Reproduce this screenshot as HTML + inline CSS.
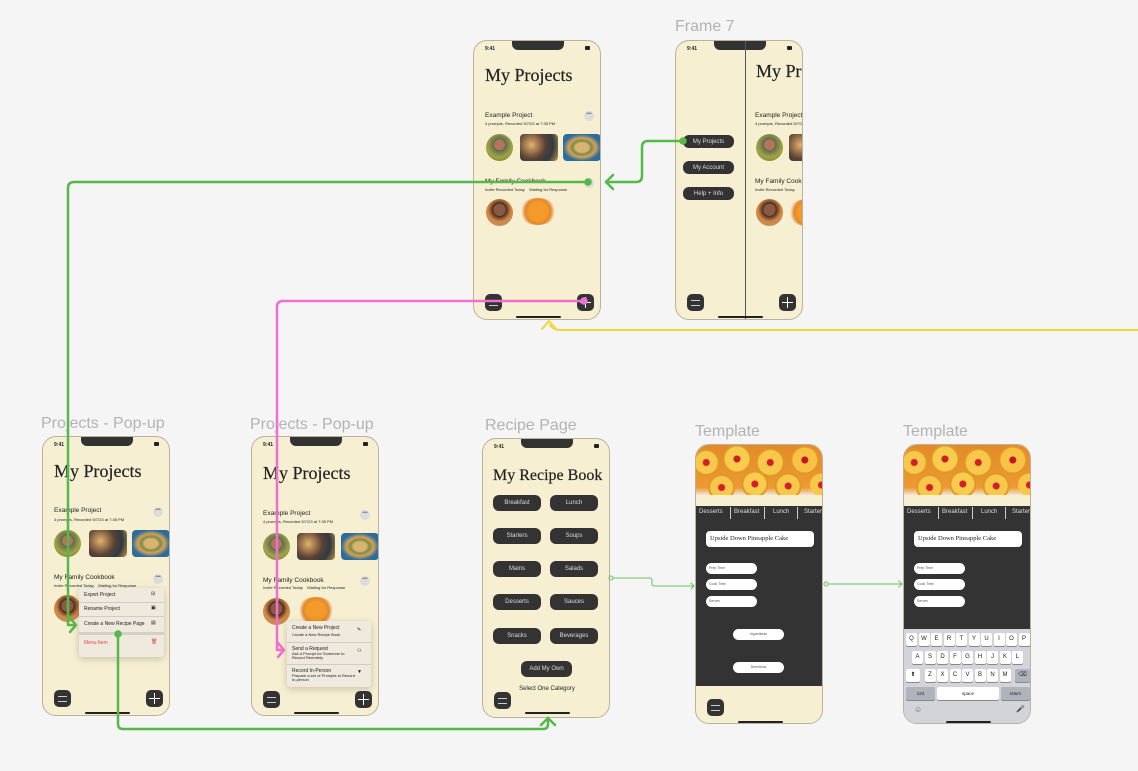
<!DOCTYPE html>
<html><head><meta charset="utf-8">
<style>
*{margin:0;padding:0;box-sizing:border-box}
body{width:1138px;height:771px;background:#f5f5f5;position:relative;overflow:hidden;font-family:"Liberation Sans",sans-serif;color:#222}
.ph{position:absolute;width:128px;height:280px;background:#f7efd2;border:1px solid #b9b29c;border-radius:14px;overflow:hidden}
.ph *{position:absolute}
.notch{left:38px;top:-1px;width:52px;height:10px;background:#333;border-radius:0 0 6px 6px}
.st{left:11px;top:5px;font-size:5px;font-weight:bold}
.sig{right:10px;top:5px;width:14px;height:4px}
.sig:after{content:"";position:absolute;right:0;top:0;width:5px;height:4px;background:#222;border-radius:1px}
.ti{font-family:"Liberation Serif",serif;font-size:18px;white-space:nowrap;-webkit-text-stroke:.2px #222}
.h1{font-size:6.5px;white-space:nowrap}
.h2{font-size:4px;white-space:nowrap}
.dots{width:10px;height:10px;border-radius:50%;background:#dcdcdc;font-size:5px;text-align:center;line-height:7px;color:#666}
.c1{width:27px;height:27px;border-radius:50%;background:radial-gradient(circle at 50% 40%,#b7745a 0 25%,#5b6b52 26%,#a3a542 60%,#5d6a2e)}
.c2{width:27px;height:27px;border-radius:50%;background:radial-gradient(circle at 50% 40%,#8a5a44 0 28%,#3e2d28 30%,#d9843a 55%,#8fa0a8)}
.r1{width:38px;height:27px;border-radius:4px;background:radial-gradient(circle at 30% 40%,#e6b16b,#5a4234 45%,#2e3a44 70%,#c9923d)}
.r2{width:38px;height:27px;border-radius:4px;background:radial-gradient(ellipse at 50% 50%,#d9b470 0 25%,#7a8c46 35%,#d3a05a 50%,#2d6d9b 70%)}
.r3{width:38px;height:27px;border-radius:50%;background:radial-gradient(circle,#f29a2a 0 40%,#e5872c 55%,#f1dfc7 70%,transparent 72%)}
.bb{width:17px;height:17px;border-radius:5px;background:#333}
.bb.m:after{content:"";position:absolute;left:4px;top:6px;width:9px;height:4px;border-top:1.5px solid #ccc;border-bottom:1.5px solid #ccc}
.bb.p:before{content:"";position:absolute;left:8px;top:3px;width:1.4px;height:11px;background:#fff}
.bb.p:after{content:"";position:absolute;left:3px;top:8px;width:11px;height:1.4px;background:#fff}
.hi{left:42px;top:275px;width:45px;height:2px;background:#222;border-radius:1px}
.lbl{position:absolute;color:#b3b3b3;font-size:16px;white-space:nowrap}
.pill{background:#333;color:#ddd;font-size:6px;border-radius:6px;white-space:nowrap;display:flex;align-items:center;justify-content:center}
.menu{background:#efe9de;box-shadow:0 2px 8px rgba(0,0,0,.2);border-radius:3px}
.mi{font-size:5px;left:5px;white-space:nowrap}
.wp{background:#fff;border-radius:6px;font-size:3.5px;color:#555;padding-left:3px;line-height:11px;white-space:nowrap}
.k{background:#fff;border-radius:2px;font-size:6px;text-align:center;line-height:13px;width:11px;height:13px;box-shadow:0 1px 0 #888}
.img{left:0;top:0;width:128px;height:50px;background:
radial-gradient(circle at 8% 35%,#d21f2a 0 3px,#f7c84a 4px 11px,#e0962a 12px 13px,transparent 14px),
radial-gradient(circle at 32% 28%,#c91d27 0 3px,#f9cc4d 4px 12px,#e0962a 13px 14px,transparent 15px),
radial-gradient(circle at 58% 35%,#d21f2a 0 3px,#f7c84a 4px 12px,#e0962a 13px 14px,transparent 15px),
radial-gradient(circle at 85% 30%,#c01823 0 3px,#f8c244 4px 12px,#e0962a 13px 14px,transparent 15px),
radial-gradient(circle at 20% 85%,#d21f2a 0 3px,#f7c84a 4px 11px,#e0962a 12px 13px,transparent 14px),
radial-gradient(circle at 46% 78%,#d21f2a 0 3px,#f9cc4d 4px 11px,#e0962a 12px 13px,transparent 14px),
radial-gradient(circle at 72% 82%,#d21f2a 0 3px,#f7c84a 4px 11px,#e0962a 12px 13px,transparent 14px),
radial-gradient(circle at 98% 80%,#d21f2a 0 3px,#f7c84a 4px 11px,transparent 12px),
linear-gradient(#e48a28,#ec9a30 85%,#f0e6d8)}
.tabs{left:0;top:61px;width:128px;height:14px;font-size:6px;color:#ddd;white-space:nowrap}
</style></head><body>

<div class="lbl" style="left:675px;top:18px">Frame 7</div>
<div class="lbl" style="left:41px;top:415px">Projects - Pop-up</div>
<div class="lbl" style="left:250px;top:416px">Projects - Pop-up</div>
<div class="lbl" style="left:485px;top:417px">Recipe Page</div>
<div class="lbl" style="left:695px;top:423px">Template</div>
<div class="lbl" style="left:903px;top:423px">Template</div>

<!-- A -->
<div class="ph" style="left:473px;top:40px">
<div class="notch"></div><div class="st">9:41</div><div class="sig"></div>
<div class="ti" style="left:11px;top:24px">My Projects</div>
<div class="h1" style="left:11px;top:71px">Example Project</div>
<div class="h2" style="left:11px;top:80px">4 prompts, Recorded 5/7/23 at 7:35 PM</div>
<div class="dots" style="left:110px;top:70px">•••</div>
<div class="c1" style="left:12px;top:93px"></div><div class="r1" style="left:46px;top:93px"></div><div class="r2" style="left:89px;top:93px"></div>
<div class="h1" style="left:11px;top:137px">My Family Cookbook</div>
<div class="h2" style="left:11px;top:146px">Invite Recorded Today &nbsp;&nbsp; Waiting for Response</div>
<div class="dots" style="left:110px;top:137px">•••</div>
<div class="c2" style="left:12px;top:158px"></div><div class="r3" style="left:45px;top:157px"></div>
<div class="bb m" style="left:11px;top:253px"></div><div class="bb p" style="left:103px;top:253px"></div>
<div class="hi"></div></div>

<!-- B -->
<div class="ph" style="left:675px;top:40px">
<div class="notch"></div><div class="st">9:41</div><div class="sig"></div>
<div style="left:69px;top:0;width:1px;height:280px;background:#555"></div>
<div class="ti" style="left:80px;top:20px">My Projects</div>
<div class="h1" style="left:79px;top:71px">Example Project</div>
<div class="h2" style="left:79px;top:80px">4 prompts, Recorded 5/7/23</div>
<div class="c1" style="left:80px;top:93px"></div><div class="r1" style="left:113px;top:93px"></div>
<div class="h1" style="left:79px;top:137px">My Family Cookbook</div>
<div class="h2" style="left:79px;top:146px">Invite Recorded Today</div>
<div class="c2" style="left:80px;top:158px"></div><div class="r3" style="left:112px;top:158px"></div>
<div class="pill" style="left:7px;top:94px;width:51px;height:13px">My Projects</div>
<div class="pill" style="left:7px;top:120px;width:51px;height:13px">My Account</div>
<div class="pill" style="left:7px;top:146px;width:51px;height:13px">Help + Info</div>
<div class="bb m" style="left:11px;top:253px"></div><div class="bb p" style="left:103px;top:253px"></div>
<div class="hi"></div></div>

<!-- C -->
<div class="ph" style="left:42px;top:436px">
<div class="notch"></div><div class="st">9:41</div><div class="sig"></div>
<div class="ti" style="left:11px;top:24px">My Projects</div>
<div class="h1" style="left:11px;top:70px">Example Project</div>
<div class="h2" style="left:11px;top:80px">4 prompts, Recorded 5/7/23 at 7:35 PM</div>
<div class="dots" style="left:110px;top:70px">•••</div>
<div class="c1" style="left:11px;top:93px"></div><div class="r1" style="left:46px;top:93px"></div><div class="r2" style="left:89px;top:93px"></div>
<div class="h1" style="left:11px;top:137px">My Family Cookbook</div>
<div class="h2" style="left:11px;top:146px">Invite Recorded Today &nbsp;&nbsp; Waiting for Response</div>
<div class="dots" style="left:110px;top:137px">•••</div>
<div class="c2" style="left:11px;top:158px"></div>
<div class="menu" style="left:36px;top:151px;width:85px;height:69px">
<div class="mi" style="top:4px">Export Project</div><div class="mi" style="left:72px;top:3px">⊟</div>
<div style="left:0;top:14px;width:85px;height:.5px;background:#ccc"></div>
<div class="mi" style="top:18px">Rename Project</div><div class="mi" style="left:72px;top:17px">▣</div>
<div style="left:0;top:28px;width:85px;height:.5px;background:#ccc"></div>
<div class="mi" style="top:33px">Create a New Recipe Page</div><div class="mi" style="left:72px;top:32px">▤</div>
<div style="left:0;top:44px;width:85px;height:3px;background:#d4d0c8"></div>
<div class="mi" style="top:52px;color:#e04a4a">Menu Item</div><div class="mi" style="left:72px;top:51px;color:#e04a4a">🗑</div>
</div>
<div class="bb m" style="left:11px;top:253px"></div><div class="bb p" style="left:103px;top:253px"></div>
<div class="hi"></div></div>

<!-- D -->
<div class="ph" style="left:251px;top:436px">
<div class="notch"></div><div class="st">9:41</div><div class="sig"></div>
<div class="ti" style="left:11px;top:26px">My Projects</div>
<div class="h1" style="left:11px;top:73px">Example Project</div>
<div class="h2" style="left:11px;top:82px">4 prompts, Recorded 5/7/23 at 7:35 PM</div>
<div class="dots" style="left:108px;top:73px">•••</div>
<div class="c1" style="left:11px;top:96px"></div><div class="r1" style="left:45px;top:96px"></div><div class="r2" style="left:89px;top:96px"></div>
<div class="h1" style="left:11px;top:140px">My Family Cookbook</div>
<div class="h2" style="left:11px;top:148px">Invite Recorded Today &nbsp;&nbsp; Waiting for Response</div>
<div class="dots" style="left:108px;top:139px">•••</div>
<div class="c2" style="left:11px;top:161px"></div><div class="r3" style="left:45px;top:160px"></div>
<div class="menu" style="left:35px;top:184px;width:84px;height:66px">
<div class="mi" style="top:4px">Create a New Project</div><div class="h2" style="left:5px;top:11px">Create a New Recipe Book</div><div class="mi" style="left:70px;top:6px">✎</div>
<div style="left:0;top:21px;width:84px;height:.5px;background:#ccc"></div>
<div class="mi" style="top:25px">Send a Request</div><div class="h2" style="left:5px;top:31px;line-height:4px">Ask a Prompt for Someone to<br>Record Remotely</div><div class="mi" style="left:70px;top:27px">⚇</div>
<div style="left:0;top:43px;width:84px;height:.5px;background:#ccc"></div>
<div class="mi" style="top:47px">Record In-Person</div><div class="h2" style="left:5px;top:53px;line-height:4px">Prepare a set of Prompts to Record<br>In-person</div><div class="mi" style="left:70px;top:48px">▼</div>
</div>
<div class="bb m" style="left:11px;top:254px"></div><div class="bb p" style="left:103px;top:254px"></div>
<div class="hi"></div></div>

<!-- E -->
<div class="ph" style="left:482px;top:438px">
<div class="notch"></div><div class="st">9:41</div><div class="sig"></div>
<div class="ti" style="left:10px;top:28px;font-size:16px">My Recipe Book</div>
<div class="pill" style="left:10px;top:56px;width:48px;height:16px">Breakfast</div>
<div class="pill" style="left:67px;top:56px;width:48px;height:16px">Lunch</div>
<div class="pill" style="left:10px;top:89px;width:48px;height:16px">Starters</div>
<div class="pill" style="left:67px;top:89px;width:48px;height:16px">Soups</div>
<div class="pill" style="left:10px;top:122px;width:48px;height:16px">Mains</div>
<div class="pill" style="left:67px;top:122px;width:48px;height:16px">Salads</div>
<div class="pill" style="left:10px;top:155px;width:48px;height:16px">Desserts</div>
<div class="pill" style="left:67px;top:155px;width:48px;height:16px">Sauces</div>
<div class="pill" style="left:10px;top:189px;width:48px;height:16px">Snacks</div>
<div class="pill" style="left:67px;top:189px;width:48px;height:16px">Beverages</div>
<div class="pill" style="left:38px;top:222px;width:51px;height:16px">Add My Own</div>
<div style="left:0;top:247px;width:128px;text-align:center;font-size:6px">Select One Category</div>
<div class="bb m" style="left:11px;top:253px"></div>
<div class="hi" style="top:273px"></div></div>

<!-- F -->
<div class="ph" style="left:695px;top:444px">
<div class="img"></div>
<div style="left:0;top:61px;width:128px;height:180px;background:#333"></div>
<div class="tabs"><span style="left:3px;top:3px">Desserts</span><span style="left:38px;top:3px">Breakfast</span><span style="left:77px;top:3px">Lunch</span><span style="left:108px;top:3px">Starters</span>
<i style="left:34px;top:1px;width:1px;height:12px;background:#ccc"></i><i style="left:68px;top:1px;width:1px;height:12px;background:#ccc"></i><i style="left:101px;top:1px;width:1px;height:12px;background:#ccc"></i></div>
<div style="left:10px;top:86px;width:108px;height:16px;background:#fff;border-radius:4px;font-family:'Liberation Serif',serif;font-size:6.5px;line-height:16px;padding-left:4px;white-space:nowrap">Upside Down Pineapple Cake</div>
<div class="wp" style="left:10px;top:118px;width:51px;height:11px">Prep Time</div>
<div class="wp" style="left:10px;top:134px;width:51px;height:11px">Cook Time</div>
<div class="wp" style="left:10px;top:151px;width:51px;height:11px">Serves</div>
<div class="wp" style="left:37px;top:184px;width:51px;height:11px;text-align:center;padding:0">Ingredients</div>
<div class="wp" style="left:37px;top:217px;width:51px;height:11px;text-align:center;padding:0">Directions</div>
<div class="bb m" style="left:11px;top:254px"></div>
<div class="hi" style="top:276px"></div></div>

<!-- G -->
<div class="ph" style="left:903px;top:444px">
<div class="img"></div>
<div style="left:0;top:61px;width:128px;height:125px;background:#333"></div>
<div class="tabs"><span style="left:3px;top:3px">Desserts</span><span style="left:38px;top:3px">Breakfast</span><span style="left:77px;top:3px">Lunch</span><span style="left:108px;top:3px">Starters</span>
<i style="left:34px;top:1px;width:1px;height:12px;background:#ccc"></i><i style="left:68px;top:1px;width:1px;height:12px;background:#ccc"></i><i style="left:101px;top:1px;width:1px;height:12px;background:#ccc"></i></div>
<div style="left:10px;top:86px;width:108px;height:16px;background:#fff;border-radius:4px;font-family:'Liberation Serif',serif;font-size:6.5px;line-height:16px;padding-left:4px;white-space:nowrap">Upside Down Pineapple Cake</div>
<div class="wp" style="left:10px;top:118px;width:51px;height:11px">Prep Time</div>
<div class="wp" style="left:10px;top:134px;width:51px;height:11px">Cook Time</div>
<div class="wp" style="left:10px;top:151px;width:51px;height:11px">Serves</div>
<div style="left:0;top:184px;width:128px;height:96px;background:#d2d4da"></div>
<div class="k" style="left:2px;top:188px">Q</div><div class="k" style="left:14.5px;top:188px">W</div><div class="k" style="left:27px;top:188px">E</div><div class="k" style="left:39.5px;top:188px">R</div><div class="k" style="left:52px;top:188px">T</div><div class="k" style="left:64.5px;top:188px">Y</div><div class="k" style="left:77px;top:188px">U</div><div class="k" style="left:89.5px;top:188px">I</div><div class="k" style="left:102px;top:188px">O</div><div class="k" style="left:114.5px;top:188px">P</div>
<div class="k" style="left:8px;top:206px">A</div><div class="k" style="left:20.5px;top:206px">S</div><div class="k" style="left:33px;top:206px">D</div><div class="k" style="left:45.5px;top:206px">F</div><div class="k" style="left:58px;top:206px">G</div><div class="k" style="left:70.5px;top:206px">H</div><div class="k" style="left:83px;top:206px">J</div><div class="k" style="left:95.5px;top:206px">K</div><div class="k" style="left:108px;top:206px">L</div>
<div class="k" style="left:2px;top:224px;width:14px">⬆</div><div class="k" style="left:20.5px;top:224px">Z</div><div class="k" style="left:33px;top:224px">X</div><div class="k" style="left:45.5px;top:224px">C</div><div class="k" style="left:58px;top:224px">V</div><div class="k" style="left:70.5px;top:224px">B</div><div class="k" style="left:83px;top:224px">N</div><div class="k" style="left:95.5px;top:224px">M</div><div class="k" style="left:111px;top:224px;width:15px;background:#aeb3bc">⌫</div>
<div class="k" style="left:2px;top:242px;width:29px;background:#aeb3bc;font-size:4.5px">123</div>
<div class="k" style="left:33px;top:242px;width:62px;font-size:4.5px">space</div>
<div class="k" style="left:97px;top:242px;width:29px;background:#aeb3bc;font-size:4.5px">return</div>
<div style="left:10px;top:260px;font-size:8px;color:#666">☺</div>
<div style="left:112px;top:260px;font-size:7px;color:#666">🎤</div>
<div class="hi" style="top:276px"></div></div>

<svg style="position:absolute;left:0;top:0" width="1138" height="771" fill="none" stroke-linecap="round" stroke-linejoin="round">
<g stroke="#54b948" stroke-width="2.5">
<path d="M588 182 H74 Q68 182 68 188 V625 H75"/><path d="M70 618 L76 625 L70 632"/>
<circle cx="588" cy="182" r="2.5" fill="#54b948"/>
<path d="M683 141 H648 Q642 141 642 147 V176 Q642 182 636 182 H606"/><path d="M613 175 L606 182 L613 189"/>
<circle cx="683" cy="141" r="2.5" fill="#54b948"/>
<path d="M118 634 V724 Q118 729 123 729 H543 Q548 729 548 724 V719"/><path d="M541 725 L548 718 L555 725"/>
<circle cx="118" cy="634" r="2.5" fill="#54b948"/>
</g>
<g stroke="#ef6fd0" stroke-width="2.5">
<path d="M584 301 H283 Q277 301 277 307 V650 H283"/><path d="M278 643 L284 650 L278 657"/>
<circle cx="584" cy="301" r="2.5" fill="#ef6fd0"/>
</g>
<g stroke="#f1d63a" stroke-width="2">
<path d="M1138 330 H560 Q553 330 550 325"/><path d="M542 329 L549 321 L556 329"/>
</g>
<g stroke="#6cc160" stroke-width="1">
<circle cx="611" cy="578" r="2"/><path d="M613 578 H650 Q652 578 652 581 V584 Q652 586 655 586 H694"/><path d="M691 583 L694 586 L691 589"/>
<circle cx="826" cy="584" r="2"/><path d="M828 584 H902"/><path d="M899 581 L902 584 L899 587"/>
</g>
</svg>
</body></html>
